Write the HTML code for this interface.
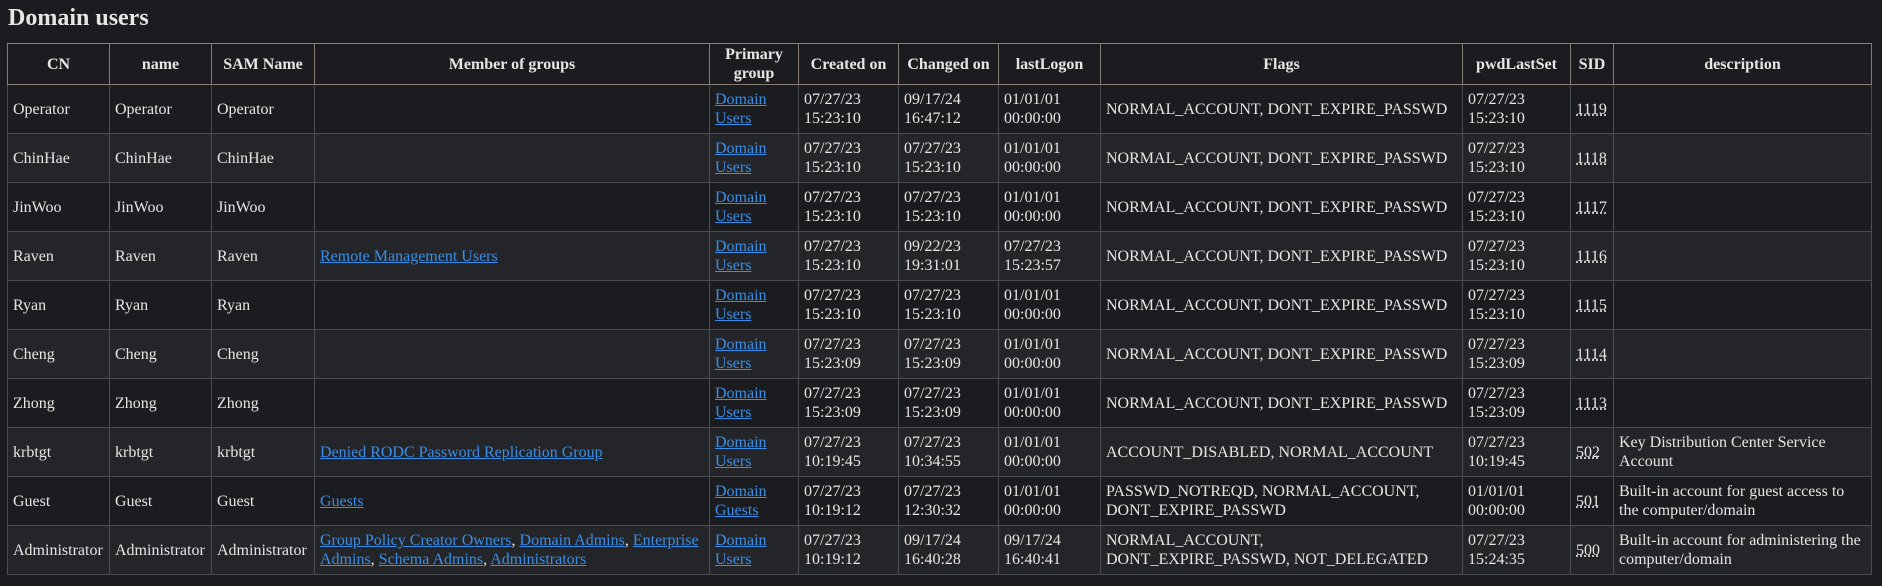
<!DOCTYPE html>
<html><head><meta charset="utf-8"><style>
body{margin:0;background:#1b1c1f;color:#e8e6e3;font-family:"Liberation Serif",serif;font-size:16px;}
h2{font-size:24px;margin:0;position:absolute;left:8px;top:5px;font-weight:bold;}
table{position:absolute;left:7px;top:43px;border-collapse:collapse;table-layout:fixed;width:1864px;}
th,td{padding:0 5px;line-height:19px;vertical-align:middle;text-align:left;}
th{border:1px solid #857d72;height:40px;text-align:center;font-weight:bold;}
td{border:1px solid #4a4d51;height:48px;}
tbody tr:nth-child(even){background:#232528;}
a{color:#3b8ee8;}
abbr{text-decoration:underline dotted;}
</style></head><body>
<h2>Domain users</h2>
<table>
<colgroup><col style="width:102px"><col style="width:102px"><col style="width:103px"><col style="width:395px"><col style="width:89px"><col style="width:100px"><col style="width:100px"><col style="width:102px"><col style="width:362px"><col style="width:108px"><col style="width:43px"><col style="width:258px"></colgroup>
<thead><tr><th>CN</th><th>name</th><th>SAM Name</th><th>Member of groups</th><th>Primary group</th><th>Created on</th><th>Changed on</th><th>lastLogon</th><th>Flags</th><th>pwdLastSet</th><th>SID</th><th>description</th></tr></thead>
<tbody>
<tr><td>Operator</td><td>Operator</td><td>Operator</td><td></td><td><a href="#">Domain Users</a></td><td>07/27/23 15:23:10</td><td>09/17/24 16:47:12</td><td>01/01/01 00:00:00</td><td>NORMAL_ACCOUNT, DONT_EXPIRE_PASSWD</td><td>07/27/23 15:23:10</td><td><abbr>1119</abbr></td><td></td></tr>
<tr><td>ChinHae</td><td>ChinHae</td><td>ChinHae</td><td></td><td><a href="#">Domain Users</a></td><td>07/27/23 15:23:10</td><td>07/27/23 15:23:10</td><td>01/01/01 00:00:00</td><td>NORMAL_ACCOUNT, DONT_EXPIRE_PASSWD</td><td>07/27/23 15:23:10</td><td><abbr>1118</abbr></td><td></td></tr>
<tr><td>JinWoo</td><td>JinWoo</td><td>JinWoo</td><td></td><td><a href="#">Domain Users</a></td><td>07/27/23 15:23:10</td><td>07/27/23 15:23:10</td><td>01/01/01 00:00:00</td><td>NORMAL_ACCOUNT, DONT_EXPIRE_PASSWD</td><td>07/27/23 15:23:10</td><td><abbr>1117</abbr></td><td></td></tr>
<tr><td>Raven</td><td>Raven</td><td>Raven</td><td><a href="#">Remote Management Users</a></td><td><a href="#">Domain Users</a></td><td>07/27/23 15:23:10</td><td>09/22/23 19:31:01</td><td>07/27/23 15:23:57</td><td>NORMAL_ACCOUNT, DONT_EXPIRE_PASSWD</td><td>07/27/23 15:23:10</td><td><abbr>1116</abbr></td><td></td></tr>
<tr><td>Ryan</td><td>Ryan</td><td>Ryan</td><td></td><td><a href="#">Domain Users</a></td><td>07/27/23 15:23:10</td><td>07/27/23 15:23:10</td><td>01/01/01 00:00:00</td><td>NORMAL_ACCOUNT, DONT_EXPIRE_PASSWD</td><td>07/27/23 15:23:10</td><td><abbr>1115</abbr></td><td></td></tr>
<tr><td>Cheng</td><td>Cheng</td><td>Cheng</td><td></td><td><a href="#">Domain Users</a></td><td>07/27/23 15:23:09</td><td>07/27/23 15:23:09</td><td>01/01/01 00:00:00</td><td>NORMAL_ACCOUNT, DONT_EXPIRE_PASSWD</td><td>07/27/23 15:23:09</td><td><abbr>1114</abbr></td><td></td></tr>
<tr><td>Zhong</td><td>Zhong</td><td>Zhong</td><td></td><td><a href="#">Domain Users</a></td><td>07/27/23 15:23:09</td><td>07/27/23 15:23:09</td><td>01/01/01 00:00:00</td><td>NORMAL_ACCOUNT, DONT_EXPIRE_PASSWD</td><td>07/27/23 15:23:09</td><td><abbr>1113</abbr></td><td></td></tr>
<tr><td>krbtgt</td><td>krbtgt</td><td>krbtgt</td><td><a href="#">Denied RODC Password Replication Group</a></td><td><a href="#">Domain Users</a></td><td>07/27/23 10:19:45</td><td>07/27/23 10:34:55</td><td>01/01/01 00:00:00</td><td>ACCOUNT_DISABLED, NORMAL_ACCOUNT</td><td>07/27/23 10:19:45</td><td><abbr>502</abbr></td><td>Key Distribution Center Service Account</td></tr>
<tr><td>Guest</td><td>Guest</td><td>Guest</td><td><a href="#">Guests</a></td><td><a href="#">Domain Guests</a></td><td>07/27/23 10:19:12</td><td>07/27/23 12:30:32</td><td>01/01/01 00:00:00</td><td>PASSWD_NOTREQD, NORMAL_ACCOUNT,<br>DONT_EXPIRE_PASSWD</td><td>01/01/01 00:00:00</td><td><abbr>501</abbr></td><td>Built-in account for guest access to the computer/domain</td></tr>
<tr><td>Administrator</td><td>Administrator</td><td>Administrator</td><td><a href="#">Group Policy Creator Owners</a>, <a href="#">Domain Admins</a>, <a href="#">Enterprise Admins</a>, <a href="#">Schema Admins</a>, <a href="#">Administrators</a></td><td><a href="#">Domain Users</a></td><td>07/27/23 10:19:12</td><td>09/17/24 16:40:28</td><td>09/17/24 16:40:41</td><td>NORMAL_ACCOUNT,<br>DONT_EXPIRE_PASSWD, NOT_DELEGATED</td><td>07/27/23 15:24:35</td><td><abbr>500</abbr></td><td>Built-in account for administering the computer/domain</td></tr>
</tbody></table>
</body></html>
